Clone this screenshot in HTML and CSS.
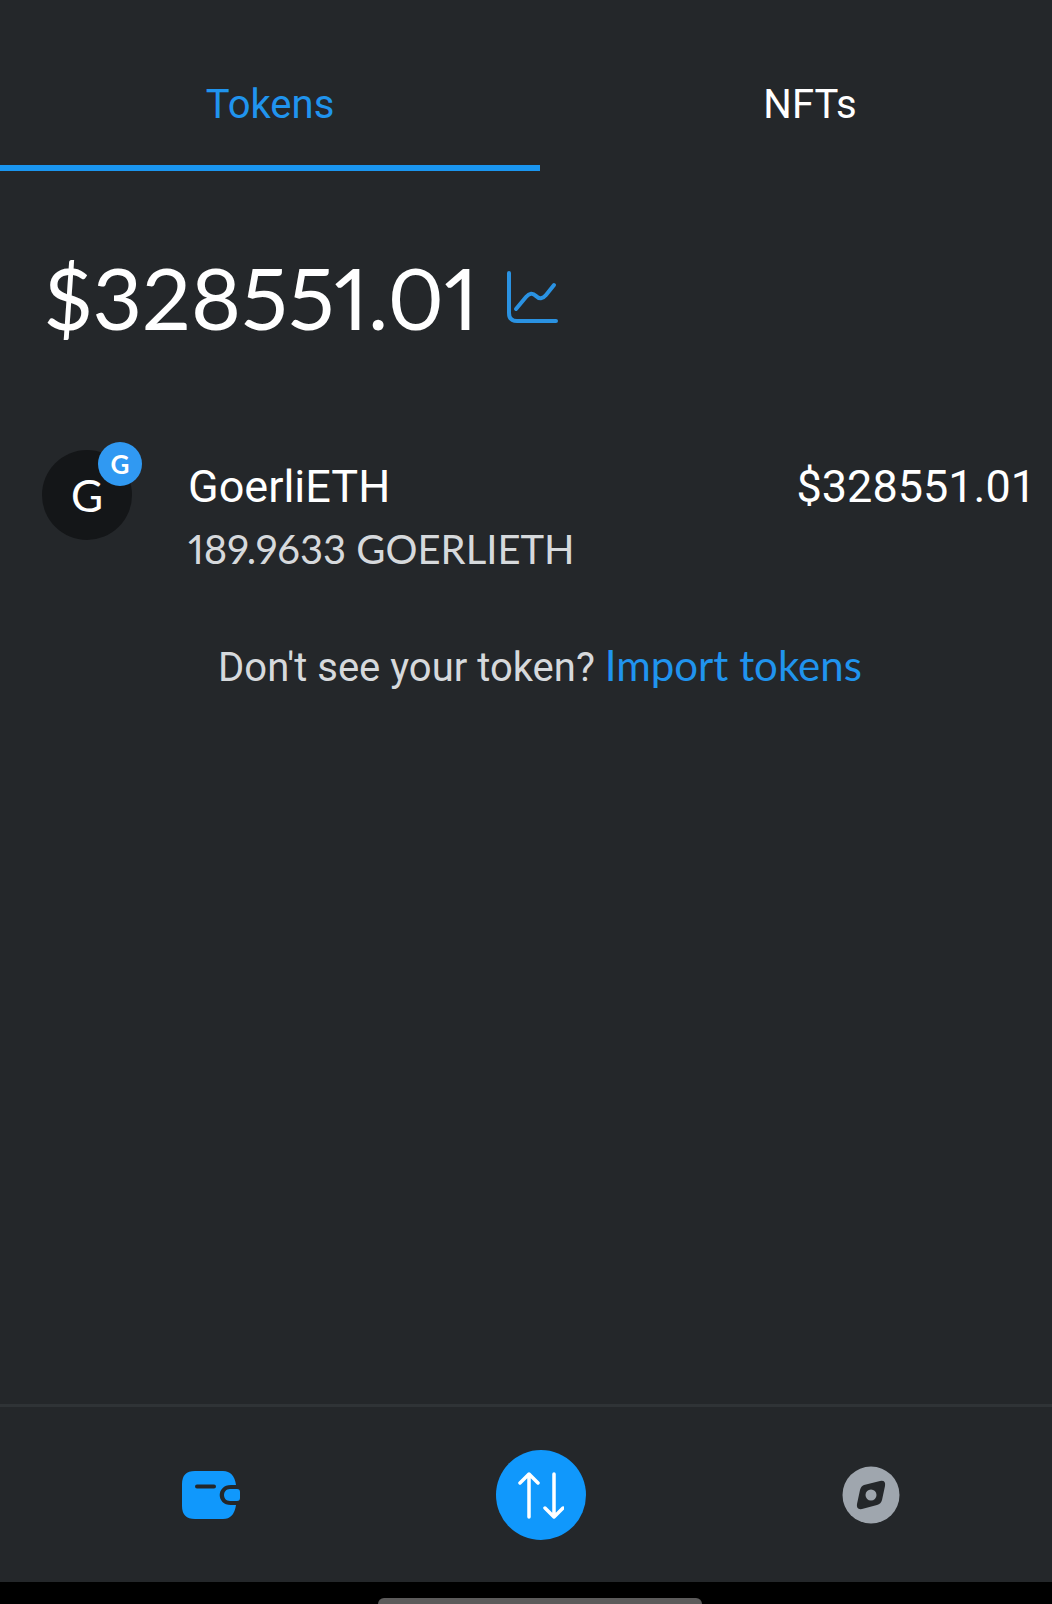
FILE: index.html
```html
<!DOCTYPE html>
<html lang="en">
<head>
<meta charset="utf-8">
<meta name="viewport" content="width=device-width, initial-scale=1">
<title>Wallet</title>
<link rel="stylesheet" href="styles.css">
</head>
<body>
<div class="app">
  <div class="tabs" role="tablist">
    <button class="tab tab-active" type="button" role="tab" aria-selected="true">Tokens</button>
    <button class="tab" type="button" role="tab" aria-selected="false">NFTs</button>
  </div>
  <main class="content">
    <div class="balance">
      <h1 class="balance-value">$328551.01</h1>
      <button class="icon-button" type="button" aria-label="Portfolio chart">
        <svg width="54" height="54" viewBox="0 0 54 54" fill="none" stroke="#2a92e2" stroke-width="4" stroke-linecap="round" stroke-linejoin="round">
          <path d="M3 3v40q0 8 8 8h39"/>
          <path d="M10 39 20 27Q25 21 30 26T40 25L48 15"/>
        </svg>
      </button>
    </div>
    <div class="token">
      <div class="avatar">G<span class="badge">G</span></div>
      <div class="token-info">
        <div class="token-name">GoerliETH</div>
        <div class="token-amount">189.9633 GOERLIETH</div>
      </div>
      <div class="token-fiat">$328551.01</div>
    </div>
    <p class="import">Don't see your token? <a class="import-link" href="#import">Import tokens</a></p>
  </main>
  <nav class="nav">
    <button class="icon-button" type="button" aria-label="Wallet">
      <svg width="58" height="48" viewBox="0 0 58 48">
        <path fill="#1098fc" d="M13 0h28q11 0 13 14h-5c-15 0-15 20 0 20h5q-2 14-13 14H13Q0 48 0 35V13Q0 0 13 0Z"/>
        <path fill="#1098fc" d="M48 18h7q3 0 3 3v6q0 3-3 3h-7c-8 0-8-12 0-12Z"/>
        <path stroke="#24272a" stroke-width="4" stroke-linecap="round" d="M15 15.500h17"/>
      </svg>
    </button>
    <button class="icon-button swap" type="button" aria-label="Swap">
      <svg width="46" height="48" viewBox="0 0 46 48" fill="none" stroke="#fff" stroke-width="3.500" stroke-linecap="round" stroke-linejoin="round">
        <path d="M11 46V3M2 12l9-9 9 9M36 3v43M27 37l9 9 9-9"/>
      </svg>
    </button>
    <button class="icon-button" type="button" aria-label="Browser">
      <svg width="58" height="58" viewBox="0 0 58 58">
        <circle cx="29" cy="29" r="28.500" fill="#9fa6ae"/>
        <path fill="#24272a" d="M22 19 38 15q6-1 5 5l-3 14q-1 4-5 5l-15 4q-6 1-5-5l3-14q1-4 4-5Z"/>
        <circle cx="29" cy="29" r="5.500" fill="#9fa6ae"/>
      </svg>
    </button>
  </nav>
  <div class="system-bar"><div class="home-handle"></div></div>
</div>
</body>
</html>
```
FILE: styles.css
```css
* {
  box-sizing: border-box;
}

body {
  margin: 0;
  overflow: hidden;
  background: #24272a;
  color: #fff;
  font-family: Roboto, sans-serif;
}

button {
  padding: 0;
  border: 0;
  background: none;
  color: inherit;
  font: inherit;
}

/* The screen is slightly wider than the window and runs off its right edge. */
.app {
  display: flex;
  flex-direction: column;
  width: calc(100% + 28px);
  min-height: 100vh;
}

.tabs {
  display: grid;
  grid-template-columns: 1fr 1fr;
}

.tabs .tab {
  padding: 81px 0 36px;
  border-bottom: 6px solid transparent;
  font-size: 40px;
  line-height: 48px;
}

.tabs .tab-active {
  border-color: #1a96f0;
  color: #2094ee;
}

.content {
  flex: 1;
}

.balance {
  display: flex;
  align-items: center;
  gap: 28px;
  padding: 74px 44px 0;
}

.balance-value {
  margin: 0;
  font-family: Lato, sans-serif;
  font-size: 86px;
  font-weight: 400;
  line-height: 104px;
  font-variant-numeric: proportional-nums;
}

.icon-button {
  display: flex;
  align-items: center;
  justify-content: center;
}

.token {
  display: flex;
  align-items: flex-start;
  padding: 101px 44px 0 42px;
}

.avatar {
  position: relative;
  width: 90px;
  height: 90px;
  margin-right: 56px;
  border-radius: 50%;
  background: #141618;
  font-family: Lato, sans-serif;
  font-size: 44px;
  line-height: 90px;
  text-align: center;
}

.badge {
  position: absolute;
  top: -8px;
  right: -10px;
  width: 44px;
  height: 44px;
  border-radius: 50%;
  background: #3099f2;
  font-size: 26px;
  font-weight: 700;
  line-height: 44px;
}

.token-info {
  flex: 1;
  padding-top: 9px;
}

.token-name,
.token-fiat {
  font-size: 45px;
  line-height: 56px;
}

.token-fiat {
  padding-top: 9px;
}

.token-amount {
  padding-top: 10px;
  color: #d6d9dc;
  font-family: Lato, sans-serif;
  font-size: 40px;
  line-height: 48px;
  font-variant-numeric: proportional-nums;
}

.import {
  margin: 68px 0 0;
  color: #d6d9dc;
  font-size: 40px;
  line-height: 48px;
  text-align: center;
}

.import-link {
  color: #2094ee;
  font-family: Lato, sans-serif;
  font-size: 42px;
  text-decoration: none;
}

.nav {
  display: flex;
  align-items: center;
  justify-content: space-between;
  height: 178px;
  padding: 0 180px 0 182px;
  border-top: 3px solid #2f3336;
}

.swap {
  width: 90px;
  height: 90px;
  border-radius: 50%;
  background: #1098fc;
}

.system-bar {
  height: 22px;
  padding-top: 16px;
  overflow: hidden;
  background: #000;
}

.home-handle {
  width: 30%;
  height: 12px;
  margin: 0 auto;
  border-radius: 6px;
  background: #5c5b5b;
}
```
